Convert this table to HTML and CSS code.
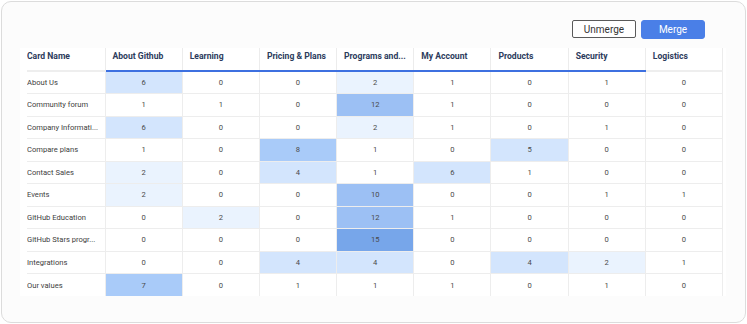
FILE: index.html
```html
<!DOCTYPE html>
<html>
<head>
<meta charset="utf-8">
<link rel="stylesheet" href="styles.css">
</head>
<body>
<div class="card">
  <div class="toolbar">
    <button class="btn btn-outline">Unmerge</button>
    <button class="btn btn-primary">Merge</button>
  </div>
  <div class="table-wrap">
    <table class="grid">
      <thead>
        <tr>
          <th class="label-col">Card Name</th>
          <th class="sel">About Github</th>
          <th class="sel">Learning</th>
          <th class="sel">Pricing &amp; Plans</th>
          <th class="sel">Programs and...</th>
          <th class="sel">My Account</th>
          <th class="sel">Products</th>
          <th class="sel">Security</th>
          <th class="plain">Logistics</th>
        </tr>
      </thead>
      <tbody>
        <tr><td class="label">About Us</td><td class="l3">6</td><td>0</td><td>0</td><td class="l1">2</td><td>1</td><td>0</td><td>1</td><td>0</td></tr>
        <tr><td class="label">Community forum</td><td>1</td><td>1</td><td>0</td><td class="l5">12</td><td>1</td><td>0</td><td>0</td><td>0</td></tr>
        <tr><td class="label">Company Informati...</td><td class="l3">6</td><td>0</td><td>0</td><td class="l1">2</td><td>1</td><td>0</td><td>1</td><td>0</td></tr>
        <tr><td class="label">Compare plans</td><td>1</td><td>0</td><td class="l4">8</td><td>1</td><td>0</td><td class="l3">5</td><td>0</td><td>0</td></tr>
        <tr><td class="label">Contact Sales</td><td class="l1">2</td><td>0</td><td class="l3">4</td><td>1</td><td class="l3">6</td><td>1</td><td>0</td><td>0</td></tr>
        <tr><td class="label">Events</td><td class="l1">2</td><td>0</td><td>0</td><td class="l5">10</td><td>0</td><td>0</td><td>1</td><td>1</td></tr>
        <tr><td class="label">GitHub Education</td><td>0</td><td class="l1">2</td><td>0</td><td class="l5">12</td><td>1</td><td>0</td><td>0</td><td>0</td></tr>
        <tr><td class="label">GitHub Stars progr...</td><td>0</td><td>0</td><td>0</td><td class="l6">15</td><td>0</td><td>0</td><td>0</td><td>0</td></tr>
        <tr><td class="label">Integrations</td><td>0</td><td>0</td><td class="l3">4</td><td class="l3">4</td><td>0</td><td class="l3">4</td><td class="l1">2</td><td>1</td></tr>
        <tr><td class="label">Our values</td><td class="l4">7</td><td>0</td><td>1</td><td>1</td><td>1</td><td>0</td><td>1</td><td>0</td></tr>
      </tbody>
    </table>
  </div>
</div>
</body>
</html>
```
FILE: styles.css
```css
html, body {
  margin: 0;
  padding: 0;
  background: #ffffff;
  font-family: Roboto, "Liberation Sans", sans-serif;
}
.card {
  margin: 1px;
  width: 745px;
  height: 322px;
  border: 1px solid #dcdcdc;
  border-radius: 10px;
  background: #fcfcfc;
  box-sizing: border-box;
  padding: 18px 40px 0 18px;
  display: flex;
  flex-direction: column;
  gap: 9px;
}
.toolbar {
  display: flex;
  justify-content: flex-end;
  gap: 5px;
}
.btn {
  height: 18px;
  width: 64px;
  font-family: Roboto, "Liberation Sans", sans-serif;
  font-size: 10px;
  padding: 0;
  box-sizing: border-box;
  cursor: pointer;
}
.btn-outline {
  background: #ffffff;
  border: 1px solid #5a5a5a;
  border-radius: 2px;
  color: #333333;
}
.btn-primary {
  background: #4a7fe7;
  border: 1px solid #4a7fe7;
  border-radius: 3px;
  color: #ffffff;
  height: 19px;
}
.table-wrap {
  margin-right: -20px;
  width: 706px;
  background: #ffffff;
  padding-left: 7px;
  box-sizing: border-box;
  height: 248px;
  overflow: hidden;
}
.grid {
  table-layout: fixed;
  border-collapse: collapse;
  width: 696px;
}
.grid th {
  height: 23px;
  box-sizing: border-box;
  font-size: 8.6px;
  font-weight: 700;
  color: #2c3b5c;
  text-align: left;
  vertical-align: top;
  padding: 1px 0 0 7px;
  line-height: 14px;
  white-space: nowrap;
  overflow: hidden;
  text-overflow: ellipsis;
  border-left: 1px solid #ececec;
}
.grid th.label-col {
  width: 78px;
  padding-left: 0;
  border-left: none;
  border-bottom: 2px solid #eeeeee;
}
.grid th.sel {
  border-bottom: 2px solid #3d70e0;
}
.grid th.plain {
  border-bottom: 2px solid #eeeeee;
  border-right: 1px solid #ececec;
}
.grid td {
  height: 22.5px;
  box-sizing: border-box;
  padding: 0;
  font-size: 7.6px;
  color: #4a4a4a;
  text-align: center;
  border-left: 1px solid #ededed;
  border-bottom: 1px solid #ededed;
}
.grid td:last-child {
  border-right: 1px solid #ededed;
}
.grid td.label {
  text-align: left;
  border-left: none;
  padding-right: 2px;
  white-space: nowrap;
  overflow: hidden;
  text-overflow: ellipsis;
  color: #404040;
}
.grid tbody tr:last-child td {
  border-bottom: none;
}
.l1 { background: #eaf3fe; }
.l3 { background: #d3e5fd; }
.l4 { background: #a9cbf9; }
.l5 { background: #9cc0f4; }
.l6 { background: #77a6ea; }
```
